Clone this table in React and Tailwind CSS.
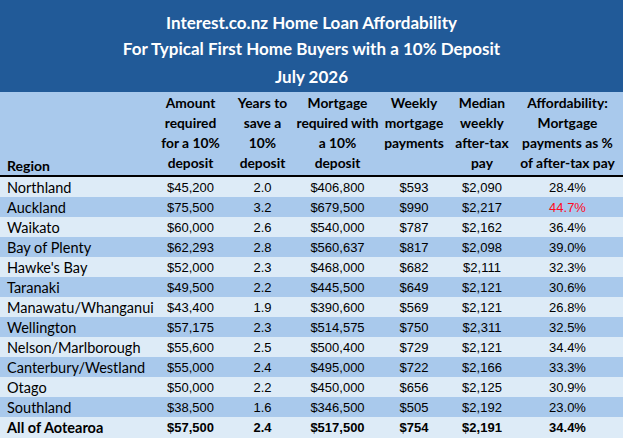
import React from "react";

const rows = [
  ["Northland", "$45,200", "2.0", "$406,800", "$593", "$2,090", "28.4%"],
  ["Auckland", "$75,500", "3.2", "$679,500", "$990", "$2,217", "44.7%"],
  ["Waikato", "$60,000", "2.6", "$540,000", "$787", "$2,162", "36.4%"],
  ["Bay of Plenty", "$62,293", "2.8", "$560,637", "$817", "$2,098", "39.0%"],
  ["Hawke's Bay", "$52,000", "2.3", "$468,000", "$682", "$2,111", "32.3%"],
  ["Taranaki", "$49,500", "2.2", "$445,500", "$649", "$2,121", "30.6%"],
  ["Manawatu/Whanganui", "$43,400", "1.9", "$390,600", "$569", "$2,121", "26.8%"],
  ["Wellington", "$57,175", "2.3", "$514,575", "$750", "$2,311", "32.5%"],
  ["Nelson/Marlborough", "$55,600", "2.5", "$500,400", "$729", "$2,121", "34.4%"],
  ["Canterbury/Westland", "$55,000", "2.4", "$495,000", "$722", "$2,166", "33.3%"],
  ["Otago", "$50,000", "2.2", "$450,000", "$656", "$2,125", "30.9%"],
  ["Southland", "$38,500", "1.6", "$346,500", "$505", "$2,192", "23.0%"],
];

const cols = "grid grid-cols-[155px_71px_73px_77px_76px_60px_1fr]";
const aptos = { fontFamily: "Lato, 'Noto Sans', sans-serif" };
const arial = { fontFamily: "'Liberation Sans', Arial, sans-serif" };

const headers = [
  ["Amount", "required", "for a 10%", "deposit"],
  ["Years to", "save a", "10%", "deposit"],
  ["Mortgage", "required with", "a 10%", "deposit"],
  ["Weekly", "mortgage", "payments"],
  ["Median", "weekly", "after-tax", "pay"],
  ["Affordability:", "Mortgage", "payments as %", "of after-tax pay"],
];

export default function App() {
  return (
    <div className="w-[623px] h-[438px] overflow-hidden bg-[#ddebf7]">
      <div
        className="bg-[#215a98] text-white font-bold text-[17px] flex flex-col items-center pt-[10px] h-[92px]"
        style={aptos}
      >
        <div className="h-[26px] leading-[26px]">Interest.co.nz Home Loan Affordability</div>
        <div className="h-[25px] leading-[25px]">For Typical First Home Buyers with a 10% Deposit</div>
        <div className="h-[31px] leading-[31px]">July 2026</div>
      </div>
      <div
        className={`${cols} bg-[#a9c9ec] h-[85px] border-b-2 border-black text-[13.8px] font-bold text-black items-start pt-[1px] pb-[2px]`}
        style={aptos}
      >
        <div className="self-end pl-[7px] leading-[20px] translate-y-[3px] text-[14px]">Region</div>
        {headers.map((h, i) => (
          <div key={i} className="flex flex-col items-center leading-[20px] whitespace-nowrap">
            {h.map((l, j) => (
              <div key={j}>{l}</div>
            ))}
          </div>
        ))}
      </div>
      {rows.map((r, i) => (
        <div
          key={i}
          className={`${cols} h-[20px] items-center text-[13px] text-black ${i % 2 === 0 ? "bg-[#ddebf7]" : "bg-[#a9c9ec]"}`}
        >
          <div className="pl-[7px] text-[14.5px]" style={aptos}>{r[0]}</div>
          {r.slice(1).map((c, j) => (
            <div
              key={j}
              className={`text-center ${j === 5 && c === "44.7%" ? "text-[#ff0a24]" : ""}`}
              style={arial}
            >
              {c}
            </div>
          ))}
        </div>
      ))}
      <div className={`${cols} h-[21px] items-center text-[13px] font-bold text-black bg-[#ddebf7]`}>
        <div className="pl-[7px] text-[14.5px]" style={aptos}>All of Aotearoa</div>
        {["$57,500", "2.4", "$517,500", "$754", "$2,191", "34.4%"].map((c, j) => (
          <div key={j} className="text-center" style={arial}>
            {c}
          </div>
        ))}
      </div>
    </div>
  );
}
